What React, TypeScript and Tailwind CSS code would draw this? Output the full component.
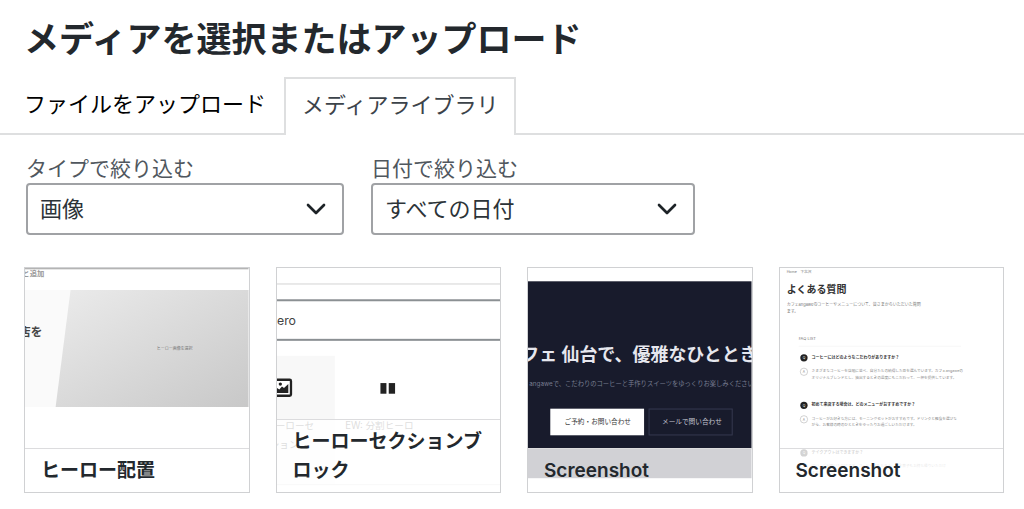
import { useState } from 'react'
import { ChevronDown } from 'lucide-react'

const tabs = ['ファイルをアップロード', 'メディアライブラリ']

const filters = [
  { id: 'media-type', label: 'タイプで絞り込む', width: 'w-[318px]', options: ['画像', '音声', '動画'] },
  { id: 'media-date', label: '日付で絞り込む', width: 'w-[324px]', options: ['すべての日付'] },
]

function HeroLayoutThumb() {
  return (
    <svg viewBox="0 0 672 672" className="block size-full" aria-hidden="true">
      <defs>
        <linearGradient id="slab" x1="0" y1="0" x2="1" y2="1">
          <stop offset="0" stopColor="#ebebeb" />
          <stop offset="1" stopColor="#c8c8c8" />
        </linearGradient>
      </defs>
      <rect width="672" height="672" fill="#fff" />
      <rect width="672" height="4" fill="#b4b4b4" />
      <text x="-8" y="24" fontSize="22" fontWeight="700" fill="#999">と追加</text>
      <rect y="66" width="672" height="352" fill="#fafafa" />
      <polygon points="137,66 672,66 672,418 92,418" fill="url(#slab)" />
      <text x="-18" y="205" fontSize="35" fontWeight="700" fill="#444">店を</text>
      <text x="396" y="248" fontSize="12" fill="#777">ヒーロー画像を選択</text>
    </svg>
  )
}

function HeroBlockThumb() {
  return (
    <svg viewBox="0 0 672 672" className="block size-full" aria-hidden="true">
      <rect width="672" height="672" fill="#fff" />
      <rect y="46" width="672" height="4" fill="#dedede" />
      <rect y="94" width="672" height="6" fill="#8b9093" />
      <rect y="213" width="672" height="6" fill="#8b9093" />
      <text x="0" y="171" fontSize="37" fill="#444">ero</text>
      <rect y="264" width="174" height="388" fill="#f8f8f8" />
      <rect x="-12" y="336" width="54" height="48" rx="4" fill="#fff" stroke="#222" strokeWidth="7" />
      <path d="M-5 376V358l12 7 8-9 6 5 13-12v27z" fill="#222" />
      <circle cx="10" cy="349" r="5" fill="#222" />
      <rect x="311" y="346" width="18" height="32" fill="#222" />
      <rect x="336" y="346" width="19" height="32" fill="#222" />
      <g fontSize="29" fill="#555">
        <text x="-4" y="483">ーローセ</text>
        <text x="-22" y="541">ション</text>
        <text x="205" y="483">EW: 分割ヒーロ</text>
      </g>
      <rect y="650" width="672" height="3" fill="#ddd" />
    </svg>
  )
}

function CafeThumb() {
  return (
    <svg viewBox="0 0 672 672" className="block size-full" aria-hidden="true">
      <rect width="672" height="672" fill="#fff" />
      <rect y="40" width="672" height="592" fill="#181b2c" />
      <text x="-20" y="280" fontSize="54" fontWeight="700" fill="#e6e7ee">フェ 仙台で、優雅なひととき</text>
      <text x="4" y="354" fontSize="19" fill="#777b90">angaweで、こだわりのコーヒーと手作りスイーツをゆっくりお楽しみください</text>
      <rect x="67" y="423" width="282" height="80" fill="#fff" />
      <text x="110" y="470" fontSize="20" fill="#333">ご予約・お問い合わせ</text>
      <rect x="364" y="424" width="250" height="78" fill="none" stroke="#353950" strokeWidth="3" />
      <text x="403" y="470" fontSize="20" fill="#c4c6d2">メールで問い合わせ</text>
    </svg>
  )
}

const faq = [
  { y: 270, q: 'コーヒーにはどのようなこだわりがありますか？', a: ['さまざまなコーヒーを店頭に並べ、自分たちの納得した豆を選んでいます。カフェangaweの', 'オリジナルブレンドとし、抽出するときの温度にもこだわって、一杯を提供しています。'] },
  { y: 413, q: '初めて来店する場合は、どのメニューがおすすめですか？', a: ['コーヒーがお好きな方には、モーニングセットがおすすめです。ドリンクと軽食を選びな', 'がら、お客様の時のひとときをゆったりお過ごしいただけます。'] },
  { y: 556, q: 'テイクアウトはできますか？', a: ['はい、ご利用いただけます。コーヒーはもちろん、焼き菓子もお持ち帰りいただけ', 'ます。'] },
]

function FaqThumb() {
  return (
    <svg viewBox="0 0 672 672" className="block size-full" aria-hidden="true">
      <rect width="672" height="672" fill="#fff" />
      <text x="20" y="16" fontSize="11" fill="#777">Home　下北沢</text>
      <text x="20" y="76" fontSize="30" fontWeight="700" fill="#333">よくある質問</text>
      <g fontSize="12" fill="#777">
        <text x="20" y="114">カフェangaweのコーヒーやメニューについて、皆さまからいただいた質問</text>
        <text x="20" y="135">ます。</text>
        <text x="56" y="216">FAQ LIST</text>
      </g>
      <rect x="56" y="234" width="488" height="2" fill="#f2f2f2" />
      {faq.map((item) => (
        <g key={item.y}>
          <circle cx="72" cy={item.y} r="11" fill="#222" />
          <text x="72" y={item.y + 4} fontSize="10" fill="#fff" textAnchor="middle">Q</text>
          <text x="95" y={item.y + 3} fontSize="12" fontWeight="700" fill="#333">{item.q}</text>
          <circle cx="72" cy={item.y + 42} r="11" fill="#fff" stroke="#bbb" strokeWidth="2" />
          <text x="72" y={item.y + 46} fontSize="10" fill="#888" textAnchor="middle">A</text>
          <text x="95" y={item.y + 43} fontSize="11" fill="#888">{item.a[0]}</text>
          <text x="95" y={item.y + 63} fontSize="11" fill="#888">{item.a[1]}</text>
        </g>
      ))}
    </svg>
  )
}

const media = [
  { id: 1, title: 'ヒーロー配置', Thumb: HeroLayoutThumb },
  { id: 2, title: 'ヒーローセクションブロック', Thumb: HeroBlockThumb },
  { id: 3, title: 'Screenshot', Thumb: CafeThumb },
  { id: 4, title: 'Screenshot', Thumb: FaqThumb },
]

export default function App() {
  const [activeTab, setActiveTab] = useState(1)

  return (
    <div className="min-h-screen bg-white font-['Inter','Noto_Sans_CJK_JP',sans-serif] text-[#23282d]">
      <h1 className="px-6 pt-4 text-[35px] leading-[46px] font-bold">メディアを選択またはアップロード</h1>

      <div role="tablist" className="mt-[15px] flex border-b-2 border-[#dedfe0] pl-2 text-[22px] leading-[52px]">
        {tabs.map((tab, i) => (
          <button
            key={tab}
            role="tab"
            aria-selected={i === activeTab}
            onClick={() => setActiveTab(i)}
            className={
              i === activeTab
                ? '-mb-0.5 border-2 border-b-0 border-[#dedfe0] bg-white px-4 pb-1 text-[#3c434a]'
                : 'pr-[18px] pb-0.5 pl-4 text-black'
            }
          >
            {tab}
          </button>
        ))}
      </div>

      <div className="flex flex-wrap gap-x-[27px] px-[26px] pt-5">
        {filters.map((f) => (
          <div key={f.id}>
            <label htmlFor={f.id} className="block text-[21px] leading-7 text-[#50575e]">
              {f.label}
            </label>
            <div className={`grid items-center ${f.width}`}>
              <select
                id={f.id}
                className="col-start-1 row-start-1 h-[52px] w-full appearance-none rounded-[4px] border-2 border-[#a0a2a5] bg-white pr-12 pl-3 text-[22px] text-[#2c3338]"
              >
                {f.options.map((o) => (
                  <option key={o}>{o}</option>
                ))}
              </select>
              <ChevronDown
                size={32}
                strokeWidth={2}
                className="pointer-events-none col-start-1 row-start-1 mr-3 justify-self-end text-[#1d2327]"
              />
            </div>
          </div>
        ))}
      </div>

      <ul className="grid grid-cols-4 gap-[26px] pt-8 pr-5 pb-4 pl-6">
        {media.map(({ id, title, Thumb }) => (
          <li key={id} className="relative aspect-square overflow-hidden border border-[#d0d1d3]">
            <Thumb />
            <div className="absolute inset-x-0 bottom-0 border-t border-[#dcdcde] bg-white/80 px-4 py-[7px] text-[19px] leading-[29px] font-semibold">
              {title}
            </div>
          </li>
        ))}
      </ul>
    </div>
  )
}
